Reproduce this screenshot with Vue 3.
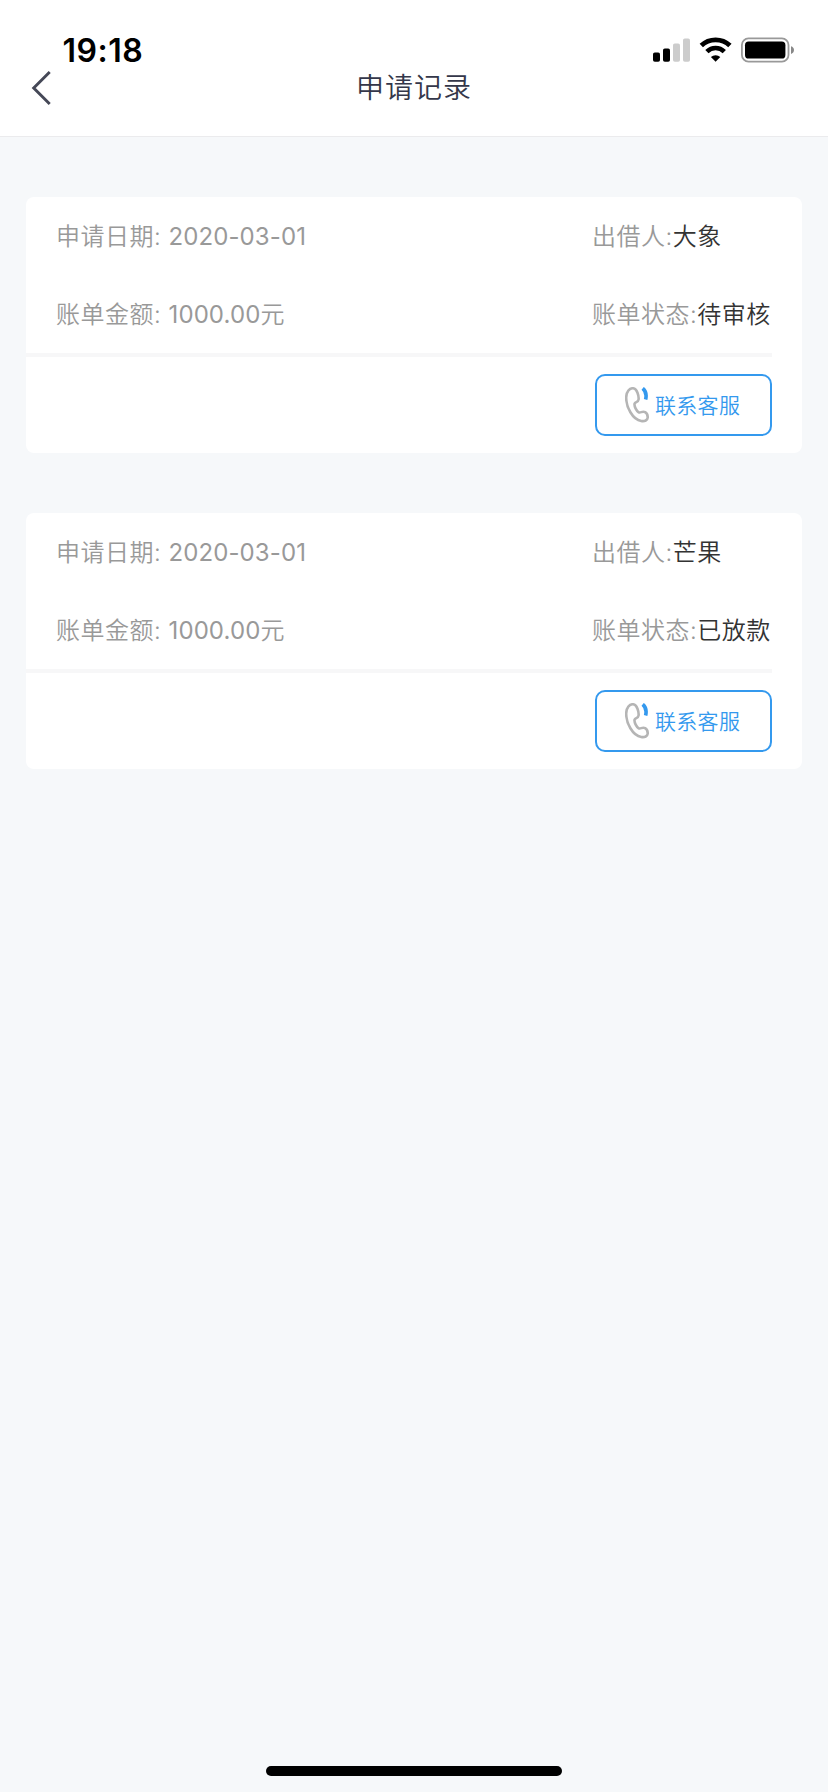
<template>
  <div class="page">
    <header class="header">
      <div class="status-bar">
        <span class="time">19:18</span>
        <svg class="status-icons" width="142" height="26" viewBox="0 0 142 26">
          <rect x="0" y="15.5" width="7" height="9.2" rx="1.8" fill="#000" />
          <rect x="10" y="11.5" width="7" height="13.2" rx="1.8" fill="#000" />
          <rect x="20" y="6.5" width="7" height="18.2" rx="1.8" fill="#ccc" />
          <rect x="30" y="1.5" width="7" height="23.2" rx="1.8" fill="#ccc" />
          <path d="M48.3 8.6a20.6 20.6 0 0 1 28.6 0" fill="none" stroke="#000" stroke-width="4.8" />
          <path d="M53.9 14.6a12.4 12.4 0 0 1 17.4 0" fill="none" stroke="#000" stroke-width="4.6" />
          <path d="M57.9 20.1a6.6 6.6 0 0 1 9.4 0l-4.7 4.7z" fill="#000" />
          <rect x="88.9" y="1.4" width="46.6" height="23.2" rx="6.6" fill="none" stroke="#999" stroke-width="1.8" />
          <rect x="92" y="4.6" width="40.4" height="16.9" rx="3.6" fill="#000" />
          <path d="M138 9.2c1.9.6 3 2 3 3.8s-1.100 3.300-3 3.900z" fill="#888" />
        </svg>
      </div>
      <nav class="nav-bar">
        <button class="back" aria-label="返回">
          <svg width="22" height="38" viewBox="0 0 22 38">
            <path d="M19.700 3 3.700 19 19.700 35" fill="none" stroke="#454857" stroke-width="2.9" />
          </svg>
        </button>
        <h1 class="title">申请记录</h1>
      </nav>
    </header>

    <main class="list">
      <section v-for="item in records" :key="item.lender" class="card">
        <div class="info">
          <p class="cell date">申请日期: <span class="num">{{ item.date }}</span></p>
          <p class="cell">出借人:<span class="value">{{ item.lender }}</span></p>
          <p class="cell">账单金额: <span class="num">{{ item.amount }}</span>元</p>
          <p class="cell">账单状态:<span class="value">{{ item.status }}</span></p>
        </div>
        <div class="actions">
          <button class="contact">
            <svg class="phone" width="24" height="36" viewBox="0 0 24 36">
              <path
                d="M8.300 1.300C4.500.9 1.400 4.500 1.200 10.500c-.2 9.500 6.400 22 15 23.500 3.600.7 6.300-.9 6.500-3.300.1-2-.5-4.200-2.600-5.500-2.700-1.700-4.500 1.200-6.400.1-2.300-1.300-4.700-6.300-4.100-8.700.5-1.900 3.700-1.200 4-4.200.3-3.500-1.500-10.700-5.300-11.100z"
                fill="none"
                stroke="#b5b5b5"
                stroke-width="2.600"
              />
              <path d="M17.700 1.300c2.700 2.300 4.200 6 2.900 11.200" fill="none" stroke="#3499ee" stroke-width="3.600" />
            </svg>
            <span class="contact-text">联系客服</span>
          </button>
        </div>
      </section>
    </main>

    <div class="home-indicator"></div>
  </div>
</template>

<script setup>
import { ref } from 'vue';

const records = ref([
  { date: '2020-03-01', lender: '大象', amount: '1000.00', status: '待审核' },
  { date: '2020-03-01', lender: '芒果', amount: '1000.00', status: '已放款' }
]);
</script>

<style>
body {
  margin: 0;
  background-color: #f6f8fa;
}
</style>

<style scoped>
.page {
  display: flex;
  flex-direction: column;
  box-sizing: border-box;
  width: 828px;
  height: 1792px;
  background-color: #f6f8fa;
  font-family: Inter, "Noto Sans CJK SC", sans-serif;
}

.header {
  box-sizing: border-box;
  height: 137px;
  background-color: #fff;
  border-bottom: 1px solid #ebebed;
}

.status-bar {
  display: flex;
  justify-content: space-between;
  align-items: flex-end;
  box-sizing: border-box;
  height: 64px;
  padding: 0 33px 1px 62.5px;
}

.time {
  font-size: 32px;
  font-weight: 600;
  line-height: 25px;
  letter-spacing: 0.5px;
  color: #000;
}

.nav-bar {
  display: grid;
  grid-template-columns: 60px 1fr 60px;
  align-items: center;
  height: 47px;
}

.back {
  display: flex;
  padding: 0 0 0 30px;
  border: 0;
  background: none;
}

.title {
  margin: 0;
  font-size: 28px;
  font-weight: 350;
  line-height: 40px;
  letter-spacing: 1px;
  text-align: center;
  color: #34374a;
}

.list {
  display: flex;
  flex-direction: column;
  flex: 1;
  gap: 60px;
  padding: 60px 26px 0;
}

.card {
  height: 256px;
  border-radius: 8px;
  background-color: #fff;
}

.info {
  display: grid;
  grid-template-columns: 536px 1fr;
  grid-template-rows: 78px 78px;
  box-sizing: border-box;
  height: 160px;
  width: 746px;
  padding-left: 30px;
  border-bottom: 4px solid #f7f7f8;
}

.cell {
  margin: 0;
  padding-top: 1px;
  font-size: 24px;
  font-weight: 350;
  line-height: 77px;
  letter-spacing: 0.5px;
  white-space: nowrap;
  color: #999;
}

.num {
  font-weight: 400;
  letter-spacing: 0.1px;
}

.value {
  color: #333;
}

.actions {
  display: flex;
  justify-content: flex-end;
  padding: 17px 30px 0 0;
}

.contact {
  display: flex;
  align-items: center;
  box-sizing: border-box;
  width: 177px;
  height: 62px;
  padding: 0 0 0 28px;
  border: 2px solid #3499ee;
  border-radius: 10px;
  background-color: #fff;
  font-family: inherit;
  font-size: 21px;
  font-weight: 350;
  letter-spacing: 0.3px;
  color: #3499ee;
}

.contact-text {
  padding-bottom: 3px;
}

.phone {
  margin-right: 6px;
}

.home-indicator {
  width: 296px;
  height: 10px;
  margin: 0 auto 16px;
  border-radius: 5px;
  background-color: #000;
}
</style>
